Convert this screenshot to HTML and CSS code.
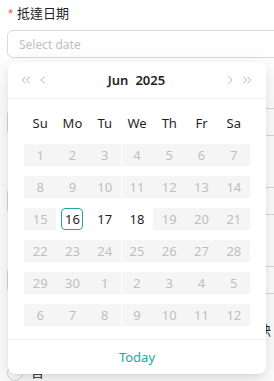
FILE: index.html
```html
<!DOCTYPE html>
<html lang="zh-Hant">
<head>
    <meta charset="UTF-8">
    <meta name="viewport" content="width=device-width, initial-scale=1.0">
    <title>抵達日期</title>
    <link rel="stylesheet" href="styles.css">
</head>
<body>
    <div class="page">
        <div class="form">
            <div class="form-item">
                <label class="form-label"><span class="required">*</span>抵達日期</label>
                <input type="text" class="picker-input" placeholder="Select date" readonly>
            </div>
            <div class="ghost-input first"></div>
            <div class="ghost-input"></div>
            <div class="ghost-input"></div>
            <div class="ghost-text">訣</div>
            <div class="ghost-radio">
                <span class="radio"></span>
                <span class="radio-label">否</span>
            </div>
        </div>

        <div class="dropdown">
            <div class="picker-header">
                <div class="nav">
                    <svg width="12" height="10" viewBox="0 0 12 10"><path d="M5.5 1 L1.5 5 L5.5 9 M10.5 1 L6.5 5 L10.5 9"/></svg>
                    <svg width="6" height="10" viewBox="0 0 6 10"><path d="M5 1 L1 5 L5 9"/></svg>
                </div>
                <div class="header-view">
                    <span>Jun</span><span class="year">2025</span>
                </div>
                <div class="nav">
                    <svg width="6" height="10" viewBox="0 0 6 10"><path d="M1 1 L5 5 L1 9"/></svg>
                    <svg width="12" height="10" viewBox="0 0 12 10"><path d="M1.5 1 L5.5 5 L1.5 9 M6.5 1 L10.5 5 L6.5 9"/></svg>
                </div>
            </div>

            <div class="picker-body">
                <div class="row weekdays">
                    <div class="cell">Su</div><div class="cell">Mo</div><div class="cell">Tu</div><div class="cell">We</div><div class="cell">Th</div><div class="cell">Fr</div><div class="cell">Sa</div>
                </div>
                <div class="row">
                    <div class="cell disabled"><span>1</span></div><div class="cell disabled"><span>2</span></div><div class="cell disabled"><span>3</span></div><div class="cell disabled"><span>4</span></div><div class="cell disabled"><span>5</span></div><div class="cell disabled"><span>6</span></div><div class="cell disabled"><span>7</span></div>
                </div>
                <div class="row">
                    <div class="cell disabled"><span>8</span></div><div class="cell disabled"><span>9</span></div><div class="cell disabled"><span>10</span></div><div class="cell disabled"><span>11</span></div><div class="cell disabled"><span>12</span></div><div class="cell disabled"><span>13</span></div><div class="cell disabled"><span>14</span></div>
                </div>
                <div class="row">
                    <div class="cell disabled"><span>15</span></div><div class="cell today"><span>16</span></div><div class="cell"><span>17</span></div><div class="cell"><span>18</span></div><div class="cell disabled"><span>19</span></div><div class="cell disabled"><span>20</span></div><div class="cell disabled"><span>21</span></div>
                </div>
                <div class="row">
                    <div class="cell disabled"><span>22</span></div><div class="cell disabled"><span>23</span></div><div class="cell disabled"><span>24</span></div><div class="cell disabled"><span>25</span></div><div class="cell disabled"><span>26</span></div><div class="cell disabled"><span>27</span></div><div class="cell disabled"><span>28</span></div>
                </div>
                <div class="row">
                    <div class="cell disabled"><span>29</span></div><div class="cell disabled"><span>30</span></div><div class="cell disabled"><span>1</span></div><div class="cell disabled"><span>2</span></div><div class="cell disabled"><span>3</span></div><div class="cell disabled"><span>4</span></div><div class="cell disabled"><span>5</span></div>
                </div>
                <div class="row">
                    <div class="cell disabled"><span>6</span></div><div class="cell disabled"><span>7</span></div><div class="cell disabled"><span>8</span></div><div class="cell disabled"><span>9</span></div><div class="cell disabled"><span>10</span></div><div class="cell disabled"><span>11</span></div><div class="cell disabled"><span>12</span></div>
                </div>
            </div>

            <div class="picker-footer">Today</div>
        </div>
    </div>
</body>
</html>
```

FILE: styles.css
```css
* {
    margin: 0;
    padding: 0;
    box-sizing: border-box;
    font-family: 'Noto Sans', 'Noto Sans CJK TC', sans-serif;
}

body {
    background: #fff;
    overflow: hidden;
    color: #1f1f1f;
}

.page {
    position: relative;
    width: 274px;
    height: 381px;
    overflow: hidden;
}

.form {
    width: 300px;
    padding-left: 7px;
}

.form-label {
    display: block;
    padding-top: 2px;
    height: 30px;
    line-height: 22px;
    font-size: 13px;
    color: #1f1f1f;
}

.required {
    color: #ff4d4f;
    margin: 0 4px 0 1px;
    font-family: 'Liberation Sans', sans-serif;
}

.picker-input {
    display: block;
    width: 100%;
    height: 28px;
    padding: 0 11px;
    border: 1px solid #d9d9d9;
    border-radius: 6px;
    font-size: 12px;
    outline: none;
    color: #1f1f1f;
}

.picker-input::placeholder {
    color: #bfbfbf;
}

.ghost-input {
    height: 28px;
    margin-top: 51px;
    border: 1px solid #d9d9d9;
    border-radius: 6px;
}

.ghost-input.first {
    margin-top: 50px;
}

.ghost-text {
    margin: 25px 0 0 251px;
    font-size: 13px;
    line-height: 22px;
}

.ghost-radio {
    display: flex;
    align-items: flex-start;
    gap: 8px;
    margin-top: 24px;
}

.radio {
    width: 16px;
    height: 16px;
    border: 1px solid #d9d9d9;
    border-radius: 50%;
}

.radio-label {
    font-size: 13px;
    line-height: 13px;
    margin-top: 1px;
}

/* date picker dropdown */
.dropdown {
    position: absolute;
    left: 8px;
    top: 62px;
    width: 258px;
    background: #fff;
    border-radius: 8px;
    box-shadow: 0 6px 16px 0 rgba(0, 0, 0, 0.08), 0 3px 6px -4px rgba(0, 0, 0, 0.12), 0 9px 28px 8px rgba(0, 0, 0, 0.05);
}

.picker-header {
    display: flex;
    align-items: center;
    height: 37px;
    padding: 0 14px 0 13px;
    border-bottom: 1px solid #f0f0f0;
}

.nav {
    display: flex;
    align-items: center;
    gap: 9px;
    width: 24px;
}

.nav:last-child {
    justify-content: flex-end;
}

.nav svg path {
    fill: none;
    stroke: #b0b0b0;
    stroke-width: 1.2;
}

.header-view {
    flex: 1;
    text-align: center;
    font-size: 13px;
    font-weight: 600;
    color: #1f1f1f;
}

.header-view .year {
    margin-left: 7px;
}

.picker-body {
    padding: 8px 16px;
}

.row {
    display: flex;
}

.cell {
    position: relative;
    flex: 1;
    height: 32px;
    display: flex;
    align-items: center;
    justify-content: center;
    font-size: 13px;
    color: #1f1f1f;
}

.cell span {
    position: relative;
    z-index: 1;
    min-width: 22px;
    height: 22px;
    line-height: 22px;
    text-align: center;
    border-radius: 4px;
}

.cell.disabled {
    color: #bfbfbf;
}

.cell.disabled::before {
    content: '';
    position: absolute;
    left: 0;
    right: 0;
    top: 5px;
    bottom: 5px;
    background: #f5f5f5;
}

.cell.disabled:nth-child(4)::before {
    left: 1px;
}

.cell.today span {
    border: 1px solid #26a69a;
    line-height: 20px;
}

.picker-footer {
    height: 35px;
    line-height: 34px;
    border-top: 1px solid #f0f0f0;
    text-align: center;
    font-size: 13px;
    color: #26a69a;
}
```
